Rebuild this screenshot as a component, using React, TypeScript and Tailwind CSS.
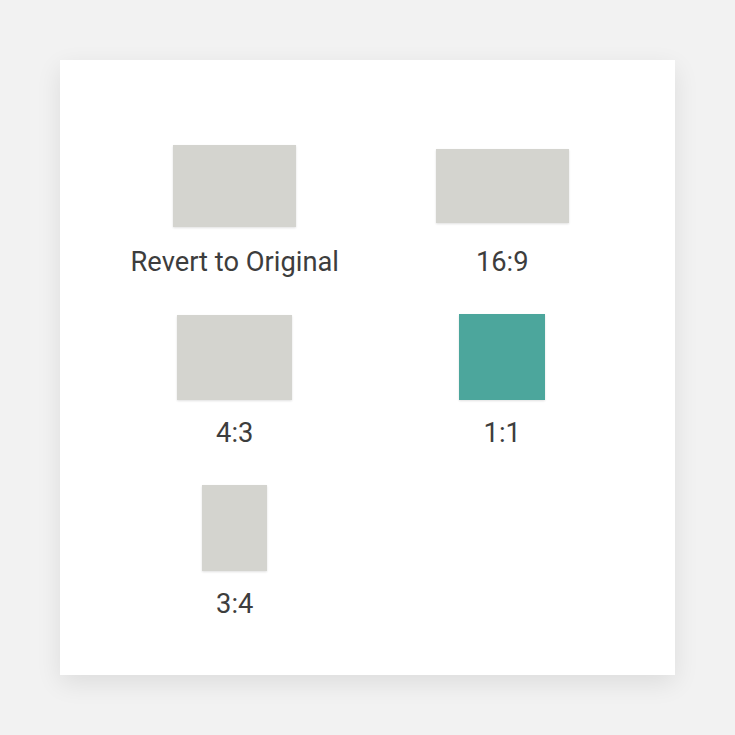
import React from "react";

type Ratio = {
  label: string;
  w: number;
  h: number;
  active?: boolean;
};

const ratios: Ratio[] = [
  { label: "Revert to Original", w: 123, h: 82 },
  { label: "16:9", w: 133, h: 74 },
  { label: "4:3", w: 115, h: 85 },
  { label: "1:1", w: 86, h: 86, active: true },
  { label: "3:4", w: 65, h: 86 },
];

const App: React.FC = () => {
  return (
    <div className="min-h-[735px] w-full bg-[#f2f2f2] flex items-center justify-center font-['Roboto',sans-serif]">
      <div className="w-[615px] h-[615px] bg-white shadow-[0_8px_24px_rgba(0,0,0,0.09)] pl-[41px] pr-[39px] pt-[83px]">
        <div className="grid grid-cols-2 gap-y-[36px]">
          {ratios.map((r) => (
            <div key={r.label} className="flex flex-col items-center">
              <div className="h-[86px] flex items-center justify-center">
                {/* preview box, sized from data */}
                <div
                  className={
                    r.active
                      ? "bg-[#4ca69c] shadow-[0_1px_2px_rgba(0,0,0,0.12)]"
                      : "bg-[#d4d4cf] shadow-[0_1px_2px_rgba(0,0,0,0.12)]"
                  }
                  style={{ width: r.w, height: r.h }}
                />
              </div>
              <p className="mt-[17px] text-[27.3px] leading-[32px] text-[#3d3d3d]">
                {r.label}
              </p>
            </div>
          ))}
        </div>
      </div>
    </div>
  );
};

export default App;
